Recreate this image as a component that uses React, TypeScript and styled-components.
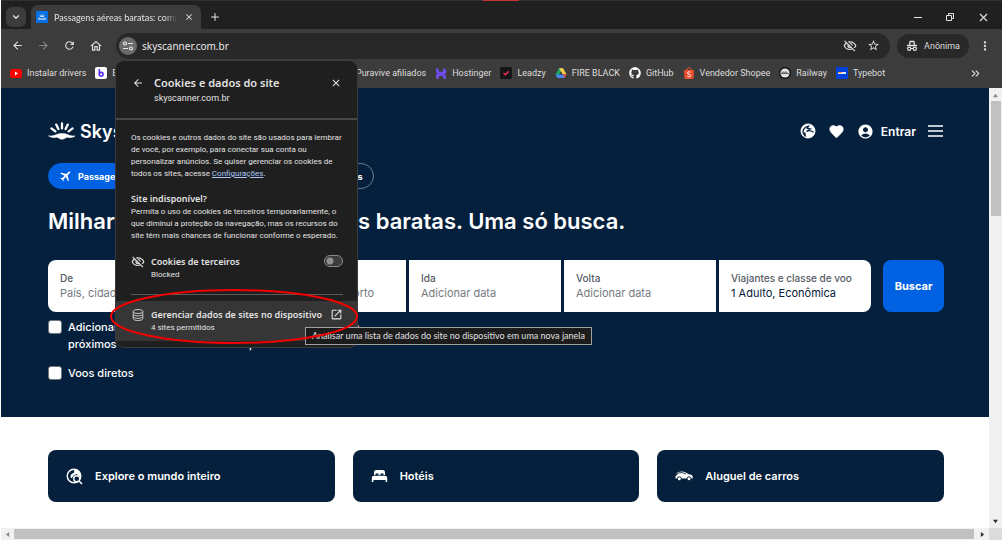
import React, { useState } from "react";
import styled, { createGlobalStyle, css } from "styled-components";
import { ChevronDown, ChevronsRight, X, Plus } from "lucide-react";
import {
  MdStarBorder,
  MdMoreVert,
  MdOutlineHome,
  MdRefresh,
  MdArrowBack,
  MdArrowForward,
  MdOutlineVisibilityOff,
  MdOpenInNew,
  MdFavorite,
  MdAccountCircle,
  MdFlight,
  MdClose,
} from "react-icons/md";
import { FaGithub } from "react-icons/fa";

const ui = `"Noto Sans", "Open Sans", sans-serif`;
const compact = `Roboto, "Noto Sans", sans-serif`;
const narrow = `Lato, Roboto, sans-serif`;
const brand = `Inter, "Liberation Sans", sans-serif`;
const navy = "#05203c";
const blue = "#0062e3";

const Global = createGlobalStyle`
  * { box-sizing: border-box; }
  html, body, #root { height: 100%; }
  body { margin: 0; background: #fff; font-family: ${ui}; }
  button, input { font: inherit; color: inherit; margin: 0; }
  button { border: 0; padding: 0; background: none; cursor: pointer; }
  h1, h2, h3, p { margin: 0; }
  svg { display: block; flex: none; }
`;

const Window = styled.div`
  position: relative;
  display: flex;
  flex-direction: column;
  min-height: 100vh;
  padding-left: 1px;
  overflow: hidden;
`;

/* Browser chrome */
const TabStrip = styled.div`
  display: flex;
  align-items: center;
  height: 29px;
  padding: 4px 12px 0 5px;
  background: #202020;
  border-top: 1px solid #303030;
  color: #e3e3e3;
  font-family: ${narrow};
`;
const RedEdge = styled.div`
  position: absolute;
  top: 0;
  left: 483px;
  width: 36px;
  height: 1px;
  background: #c23434;
`;
const TabSearch = styled.button`
  display: grid;
  place-items: center;
  width: 20px;
  height: 20px;
  border-radius: 6px;
  background: #3c3c3c;
  color: #e3e3e3;
`;
const Tab = styled.div`
  display: flex;
  align-items: center;
  width: 170px;
  height: 25px;
  margin-left: 5px;
  padding: 0 7px 0 5px;
  border-radius: 7px 7px 0 0;
  background: #3c3c3c;
  font-size: 9px;
`;
const TabTitle = styled.span`
  flex: 1;
  margin: 0 7px 0 6px;
  overflow: hidden;
  white-space: nowrap;
  mask-image: linear-gradient(90deg, #000 90%, transparent);
`;
const NewTab = styled.button`
  margin-left: 8px;
`;
const WindowButtons = styled.div`
  display: flex;
  align-items: center;
  gap: 22px;
  margin-left: auto;
`;
const Toolbar = styled.div`
  display: flex;
  align-items: center;
  height: 33px;
  padding: 0 10px;
  background: #3c3c3c;
  color: #dedede;
`;
const NavButtons = styled.div`
  display: flex;
  gap: 13px;
`;
const NavButton = styled.button<{ $dim?: boolean }>`
  color: ${(p) => (p.$dim ? "#858585" : "#dedede")};
`;
const Omnibox = styled.div`
  display: flex;
  flex: 1;
  align-items: center;
  height: 26px;
  margin-left: 13px;
  padding: 0 10px 0 3px;
  border-radius: 13px;
  background: #282828;
  gap: 10px;
`;
const SiteInfo = styled.button`
  display: grid;
  place-items: center;
  width: 18px;
  height: 18px;
  border-radius: 50%;
  background: #6a6a6a;
`;
const Address = styled.input`
  flex: 1;
  min-width: 0;
  padding: 0;
  border: 0;
  outline: 0;
  background: none;
  color: #e8e8e8;
  font-size: 10px;
  margin-left: -5px;
`;
const Incognito = styled.button`
  display: flex;
  align-items: center;
  gap: 6px;
  height: 24px;
  margin: 0 9px 0 7px;
  padding: 0 9px;
  border-radius: 12px;
  background: #282828;
  font-family: ${compact};
  font-size: 9px;
`;
const Bookmarks = styled.nav`
  display: flex;
  align-items: center;
  height: 26px;
  padding: 0 10px 4px 9px;
  background: #3c3c3c;
  color: #dedede;
  font-family: ${compact};
  gap: 9px;
`;
const Bookmark = styled.a`
  display: flex;
  align-items: center;
  gap: 5px;
  color: inherit;
  font-size: 9px;
  text-decoration: none;
  white-space: nowrap;
`;
const Hidden = styled.span<{ $width: number }>`
  width: ${(p) => p.$width}px;
`;
const More = styled.button`
  margin: 0 10px 0 auto;
`;

/* Page */
const Frame = styled.div`
  display: grid;
  flex: 1;
  grid-template-columns: 1fr 13px;
  grid-template-rows: 1fr 12px;
`;
const Page = styled.main`
  min-width: 0;
  background: #fff;
  color: #fff;
  font-family: ${brand};
`;
const Hero = styled.section`
  padding: 33px 45px 35px 47px;
  background: ${navy};
`;
const Header = styled.header`
  display: flex;
  align-items: center;
  justify-content: space-between;
  height: 20px;
`;
const Logo = styled.a`
  display: flex;
  align-items: center;
  gap: 4px;
  color: #fff;
  font-size: 18px;
  font-weight: 600;
  text-decoration: none;
`;
const Actions = styled.div`
  display: flex;
  align-items: center;
  gap: 12px;
`;
const Action = styled.button`
  display: flex;
  align-items: center;
  gap: 7px;
  font-size: 12px;
  font-weight: 600;
`;
const Pills = styled.div`
  display: flex;
  gap: 5px;
  margin-top: 22px;
`;
const Pill = styled.button<{ $active?: boolean }>`
  display: flex;
  align-items: center;
  gap: 5px;
  height: 26px;
  padding: 0 10px;
  border: 1px solid ${(p) => (p.$active ? blue : "#6b7b8e")};
  border-radius: 13px;
  background: ${(p) => (p.$active ? blue : "transparent")};
  font-size: 9px;
  font-weight: 700;
`;
const Title = styled.h1`
  margin-top: 18px;
  font-size: 22px;
  font-weight: 600;
  line-height: 28px;
`;
const Search = styled.form`
  display: grid;
  grid-template-columns: 178fr 177fr 152fr 152fr 152fr 70fr;
  column-gap: 3px;
  margin-top: 25px;
`;
const Field = styled.label`
  display: flex;
  flex-direction: column;
  justify-content: center;
  height: 52px;
  min-width: 0;
  padding: 0 12px;
  background: #fff;
  color: #545b64;
  font-size: 10px;
  font-weight: 500;
  line-height: 15px;
  &:first-of-type { border-radius: 8px 0 0 8px; }
  &:last-of-type { border-radius: 0 8px 8px 0; }
`;
const FieldInput = styled.input`
  width: 100%;
  height: 15px;
  padding: 0;
  border: 0;
  outline: 0;
  background: none;
  color: ${navy};
  font-size: 11px;
  font-weight: 400;
  &::placeholder { color: #747a81; opacity: 1; }
`;
const Submit = styled.button`
  margin-left: 9px;
  border-radius: 8px;
  background: ${blue};
  font-size: 11px;
  font-weight: 700;
`;
const Options = styled.div`
  display: grid;
  grid-template-columns: 178px 178px;
  column-gap: 3px;
  row-gap: 12px;
  margin-top: 7px;
`;
const Option = styled.label`
  display: flex;
  gap: 6px;
  font-size: 11px;
  font-weight: 500;
  line-height: 17px;
`;
const Check = styled.input`
  flex: none;
  width: 14px;
  height: 14px;
  margin-top: 1px;
  appearance: none;
  border: 1px solid #72777d;
  border-radius: 3px;
  background: #fff;
  &:checked { background: ${blue}; }
`;
const Tiles = styled.nav`
  display: grid;
  grid-template-columns: repeat(3, 1fr);
  gap: 18px;
  padding: 33px 45px 25px 47px;
`;
const Tile = styled.a`
  display: flex;
  align-items: center;
  gap: 12px;
  height: 52px;
  padding: 0 18px;
  border-radius: 8px;
  background: ${navy};
  color: #fff;
  font-size: 11px;
  font-weight: 600;
  text-decoration: none;
`;

/* Scroll bars */
const ScrollTrack = styled.div<{ $row?: boolean }>`
  display: flex;
  flex-direction: ${(p) => (p.$row ? "row" : "column")};
  align-items: center;
  justify-content: space-between;
  background: #f1f1f1;
  ${(p) => (p.$row ? css`padding: 0 4px;` : css`padding: 5px 0 4px;`)}
`;
const Thumb = styled.div<{ $row?: boolean }>`
  background: #c1c1c1;
  ${(p) =>
    p.$row
      ? css`flex: 1; height: 10px; margin: 0 6px 0 4px;`
      : css`width: 10px; height: 115px; margin: 3px 0 auto;`}
`;
const Corner = styled.div`
  background: #dcdcdc;
`;

/* Overlays */
const Popover = styled.section`
  position: absolute;
  top: 60px;
  left: 115px;
  width: 243px;
  padding-bottom: 6px;
  border: 1px solid #3a3a3a;
  border-radius: 9px;
  background: #1f1f1f;
  color: #e3e3e3;
  font-family: ${compact};
  font-size: 8px;
  line-height: 12px;
  overflow: hidden;
`;
const PopHead = styled.header`
  display: grid;
  grid-template-columns: 12px 1fr 12px;
  align-items: center;
  column-gap: 10px;
  height: 59px;
  padding: 14px 15px 12px 16px;
  border-bottom: 2px solid #474747;
`;
const PopTitle = styled.h2`
  font-family: ${ui};
  font-size: 11px;
  font-weight: 600;
  line-height: 16px;
`;
const PopSite = styled.p`
  grid-column: 2;
  line-height: 15px;
  font-size: 9px;
`;
const PopBody = styled.div`
  display: flex;
  flex-direction: column;
  padding: 12px 14px 0 15px;
  white-space: nowrap;
`;
const Settings = styled.a`
  color: #a8c7fa;
`;
const PopSub = styled.h3`
  margin-top: 12px;
  font-family: ${ui};
  font-size: 9px;
  font-weight: 600;
  line-height: 14px;
`;
const PopRow = styled.label`
  display: grid;
  grid-template-columns: 14px 1fr auto;
  column-gap: 6px;
  margin-top: 13px;
  padding-bottom: 13px;
  border-bottom: 1px solid #5a5a5a;
`;
const RowTitle = styled.strong`
  display: block;
  font-family: ${ui};
  font-size: 9px;
  font-weight: 600;
  line-height: 14px;
`;
const Toggle = styled.input`
  width: 19px;
  height: 12px;
  appearance: none;
  border: 1px solid #8a8a8a;
  border-radius: 6px;
  background: radial-gradient(circle at 5px 5px, #8f8f8f 3px, #3c3c3c 4px);
`;
const ManageRow = styled.button`
  display: grid;
  grid-template-columns: 14px 1fr 13px;
  align-items: start;
  column-gap: 6px;
  width: 100%;
  margin-top: 6px;
  padding: 7px 14px 7px 15px;
  background: #363636;
  text-align: left;
  white-space: nowrap;
`;
const Mark = styled.svg`
  position: absolute;
  top: 288px;
  left: 109px;
  pointer-events: none;
`;
const Tooltip = styled.div`
  position: absolute;
  top: 327px;
  left: 305px;
  padding: 0 6px;
  border: 1px solid #a0a0a0;
  background: #1c1c1c;
  color: #e0e0e0;
  font-family: ${narrow};
  font-size: 9px;
  line-height: 16px;
  white-space: nowrap;
`;

const Favicon = () => (
  <svg width="12" height="12" viewBox="0 0 12 12">
    <rect width="12" height="12" fill="#0770e3" />
    <path d="M2 8h8M3.5 6.5a3 3 0 0 1 5 0M4 4l.4.8M6 3.3v1M8 4l-.4.8" stroke="#fff" fill="none" />
  </svg>
);
const Tune = () => (
  <svg width="12" height="12" viewBox="0 0 12 12" fill="none" stroke="#e8e8e8" strokeWidth="1.2">
    <circle cx="3" cy="3.5" r="1.5" />
    <path d="M6 3.5h5M1 8.5h5" />
    <circle cx="9" cy="8.5" r="1.5" />
  </svg>
);
const Spy = () => (
  <svg width="12" height="12" viewBox="0 0 12 12" fill="none" stroke="#e3e3e3">
    <path d="M3.5 4.5l.7-3h3.6l.7 3M1 5.5h10" strokeWidth="1.3" />
    <circle cx="3.2" cy="8.8" r="1.6" strokeWidth="1.2" />
    <circle cx="8.8" cy="8.8" r="1.6" strokeWidth="1.2" />
    <path d="M4.8 8.5h2.4" />
  </svg>
);
const YouTube = () => (
  <svg width="12" height="12" viewBox="0 0 12 12">
    <rect y="2" width="12" height="9" rx="2.5" fill="#f00" />
    <path d="M5 4.6v3.8L8 6.5z" fill="#fff" />
  </svg>
);
const BIcon = () => (
  <svg width="12" height="12" viewBox="0 0 12 12">
    <rect width="12" height="12" rx="2" fill="#fff" />
    <path d="M4.3 2v5.5" stroke="#5a31f4" strokeWidth="1.6" />
    <circle cx="6.2" cy="7.3" r="1.9" fill="none" stroke="#5a31f4" strokeWidth="1.6" />
  </svg>
);
const HostingerIcon = () => (
  <svg width="12" height="12" viewBox="0 0 12 12" fill="#6f4be8">
    <path d="M1 1l3 1.6v2.2h4V1l3 1.600v4.300H3.500L1 5.600zM1 11V7h7.500L11 8.300V12.500L8 11V9H4v3.500z" />
  </svg>
);
const LeadzyIcon = () => (
  <svg width="12" height="12" viewBox="0 0 12 12">
    <rect width="12" height="12" rx="1.5" fill="#15151a" />
    <path d="M3.5 6l2 1.8 3.2-3.6" fill="none" stroke="#f52c5c" strokeWidth="1.5" />
  </svg>
);
const DriveIcon = () => (
  <svg width="12" height="12" viewBox="0 0 12 12">
    <path d="M4 1.2h4L6 4.7 2.5 11 .5 7.5z" fill="#1fa463" />
    <path d="M4 1.2h4l3.6 6.3H7.7z" fill="#ffcf48" />
    <path d="M.5 7.6L2.5 11h7l2-3.4h-7z" fill="#4688f4" />
    <path d="M7.7 7.6h3.9L9.5 11z" fill="#ea4335" />
    <path d="M6 4.7l1.7 2.9H4.4z" fill="#3c3c3c" />
  </svg>
);
const ShopeeIcon = () => (
  <svg width="12" height="12" viewBox="0 0 12 12">
    <path d="M1 3h10l-.6 9H1.6z" fill="#ee4d2d" />
    <path d="M4 3a2 2.3 0 0 1 4 0" fill="none" stroke="#ee4d2d" />
    <path d="M7.6 5.3C6.5 4.4 4.5 4.6 4.5 6c0 1.5 3.2 1.1 3.2 2.6 0 1.4-2.2 1.5-3.4.5" fill="none" stroke="#fff" />
  </svg>
);
const RailwayIcon = () => (
  <svg width="12" height="12" viewBox="0 0 12 12">
    <circle cx="6" cy="6" r="6" fill="#111" />
    <circle cx="6" cy="6" r="4.6" fill="#e8e8e8" />
    <path d="M2.5 5.2h6M2 6.6h8" stroke="#333" strokeWidth=".8" />
  </svg>
);
const TypebotIcon = () => (
  <svg width="12" height="12" viewBox="0 0 12 12">
    <rect width="12" height="12" fill="#0042da" />
    <path d="M2 6h8" stroke="#dfe6fa" strokeWidth="2" />
    <path d="M2 5.5h3.5" stroke="#ff8e20" />
  </svg>
);
const Sun = () => (
  <svg width="28" height="20" viewBox="0 0 28 20" fill="none" stroke="#fff" strokeLinecap="round">
    <path d="M14 2.4v5M8.2 3.6l2.2 4.4M19.800 3.6l-2.2 4.4M3.4 7.4l4 3M24.6 7.4l-4 3" strokeWidth="2.3" />
    <path d="M1 15c3.500 0 5-.2 7-1.200 3.700-1.700 8.300-1.700 12 0 2 1 3.500 1.200 7 1.200-2.500 1.600-5 1.900-7.500 1.300-1.500-.3-3 1.900-5.500 1.900s-4-2.200-5.500-1.900c-2.500.6-5 .3-7.500-1.300z" fill="#fff" strokeWidth=".6" />
  </svg>
);
const Globe = () => (
  <svg width="16" height="16" viewBox="0 0 16 16">
    <circle cx="8" cy="8" r="7" fill="#fff" stroke="#fff" />
    <path d="M5.3 13.5L3 9.5C3 6.5 5 4 8.500 3.2L7.300 5.300l3 .5-3.800 2.700C8.500 7.400 11 7.300 13.500 9.300M5.300 13.500L4.800 9.300" fill="none" stroke={navy} strokeWidth="1.3" />
  </svg>
);
const GlobeSearch = () => (
  <svg width="17" height="17" viewBox="0 0 17 17">
    <circle cx="8" cy="8" r="6.8" fill="none" stroke="#fff" strokeWidth="1.4" />
    <path d="M8 1.2a7 7 0 0 1 6.9 6.9L13 8 10.500 6 7.500 7.500 6 10 4.300 9.500 5 6.500l3.200-2z" fill="#fff" />
    <circle cx="10.7" cy="10.7" r="3" fill={navy} stroke="#fff" strokeWidth="1.4" />
    <path d="M13 13l3 3" stroke="#fff" strokeWidth="1.6" />
  </svg>
);
const Bed = () => (
  <svg width="17" height="14" viewBox="0 0 17 14" fill="#fff">
    <path d="M3 6V3.5C3 1.8 4 1 5.5 1h6C13 1 14 1.8 14 3.5V6h-1.500V4.500h-3V6h-2V4.500h-3V6zM.8 13V9c0-1.500 1-2.300 2.500-2.300h10.400c1.500 0 2.500.8 2.500 2.300v4h-1.600v-2H2.400v2z" />
  </svg>
);
const Car = () => (
  <svg width="18" height="12" viewBox="0 0 18 12">
    <path d="M1 3.5C4 .6 10 .6 13 4l3 .7c1.300.4 1.700 1 1.700 3.800H.5c-.4-2 .5-3.500 2.500-4z" fill="#fff" />
    <path d="M1.500 3.800c3-1.500 6-1.700 9.500.2" fill="none" stroke={navy} strokeWidth=".9" />
    <circle cx="4.3" cy="8.8" r="2" fill="#fff" stroke={navy} />
    <circle cx="14" cy="8.800" r="2" fill="#fff" stroke={navy} />
  </svg>
);
const Stack = () => (
  <svg width="14" height="14" viewBox="0 0 14 14" fill="none" stroke="#c8c8c8">
    <ellipse cx="7" cy="3.5" rx="4.8" ry="2" />
    <path d="M2.2 3.5v7c0 2.700 9.600 2.700 9.600 0v-7M2.200 6c0 2.500 9.600 2.500 9.600 0M2.200 8.500c0 2.500 9.600 2.500 9.600 0" />
  </svg>
);
const Burger = () => (
  <svg width="16" height="12" viewBox="0 0 16 12" stroke="#fff" strokeWidth="1.5">
    <path d="M0 1h15M0 6h15M0 11h15" />
  </svg>
);
const Arrow = ({ d, dark }: { d: string; dark?: boolean }) => (
  <svg width="5" height="5" viewBox="0 0 6 6">
    <path d={d} fill={dark ? "#303030" : "#8a8a8a"} />
  </svg>
);

const bookmarks = [
  { name: "Hostinger", icon: <HostingerIcon /> },
  { name: "Leadzy", icon: <LeadzyIcon /> },
  { name: "FIRE BLACK", icon: <DriveIcon /> },
  { name: "GitHub", icon: <FaGithub size={12} color="#fff" /> },
  { name: "Vendedor Shopee", icon: <ShopeeIcon /> },
  { name: "Railway", icon: <RailwayIcon /> },
  { name: "Typebot", icon: <TypebotIcon /> },
];

export default function App() {
  const [allowed, setAllowed] = useState(false);
  return (
    <>
      <Global />
      <Window>
        <TabStrip>
          <TabSearch aria-label="Pesquisar guias"><ChevronDown size={10} strokeWidth={3} /></TabSearch>
          <Tab>
            <Favicon />
            <TabTitle>Passagens aéreas baratas: compare</TabTitle>
            <button aria-label="Fechar guia"><MdClose size={10} /></button>
          </Tab>
          <NewTab aria-label="Nova guia"><Plus size={12} /></NewTab>
          <WindowButtons>
            <button aria-label="Minimizar"><svg width="10" height="10" stroke="#e3e3e3"><path d="M1 5.5h8" /></svg></button>
            <button aria-label="Restaurar">
              <svg width="10" height="10" fill="none" stroke="#e3e3e3"><path d="M1.5 3.5h5v5h-5zM3.5 3.5v-2h5v5h-2" /></svg>
            </button>
            <button aria-label="Fechar"><X size={13} strokeWidth={2} /></button>
          </WindowButtons>
        </TabStrip>
        <RedEdge />
        <Toolbar>
          <NavButtons>
            <NavButton aria-label="Voltar"><MdArrowBack size={13} /></NavButton>
            <NavButton aria-label="Avançar" $dim><MdArrowForward size={13} /></NavButton>
            <NavButton aria-label="Recarregar"><MdRefresh size={13} /></NavButton>
            <NavButton aria-label="Início"><MdOutlineHome size={14} /></NavButton>
          </NavButtons>
          <Omnibox>
            <SiteInfo aria-label="Informações do site"><Tune /></SiteInfo>
            <Address aria-label="Endereço" defaultValue="skyscanner.com.br" />
            <MdOutlineVisibilityOff size={14} />
            <MdStarBorder size={13} />
          </Omnibox>
          <Incognito><Spy />Anônima</Incognito>
          <button aria-label="Menu"><MdMoreVert size={14} /></button>
        </Toolbar>
        <Bookmarks>
          <Bookmark href="#"><YouTube />Instalar drivers</Bookmark>
          <Bookmark href="#"><BIcon />B</Bookmark>
          <Hidden $width={220} />
          <Bookmark href="#">Puravive afiliados</Bookmark>
          {bookmarks.map((b) => (
            <Bookmark href="#" key={b.name}>{b.icon}{b.name}</Bookmark>
          ))}
          <More aria-label="Mais favoritos"><ChevronsRight size={13} /></More>
        </Bookmarks>
        <Frame>
          <Page>
            <Hero>
              <Header>
                <Logo href="#"><Sun />Skyscanner</Logo>
                <Actions>
                  <Action aria-label="Região"><Globe /></Action>
                  <Action aria-label="Salvos"><MdFavorite size={17} /></Action>
                  <Action><MdAccountCircle size={17} />Entrar</Action>
                  <Action aria-label="Abrir menu"><Burger /></Action>
                </Actions>
              </Header>
              <Pills>
                <Pill $active><MdFlight size={14} transform="rotate(45)" />Passagens aéreas</Pill>
                <Pill><Bed />Hotéis</Pill>
                <Pill><Car />Aluguel de carros</Pill>
              </Pills>
              <Title>Milhares de passagens aéreas baratas. Uma só busca.</Title>
              <Search onSubmit={(e) => e.preventDefault()}>
                <Field>De<FieldInput placeholder="País, cidade ou aeroporto" /></Field>
                <Field>Para<FieldInput placeholder="País, cidade ou aeroporto" /></Field>
                <Field>Ida<FieldInput placeholder="Adicionar data" /></Field>
                <Field>Volta<FieldInput placeholder="Adicionar data" /></Field>
                <Field>Viajantes e classe de voo<FieldInput defaultValue="1 Adulto, Econômica" /></Field>
                <Submit>Buscar</Submit>
              </Search>
              <Options>
                <Option><Check type="checkbox" />Adicionar aeroportos próximos</Option>
                <Option><Check type="checkbox" />Adicionar aeroportos próximos</Option>
                <Option><Check type="checkbox" />Voos diretos</Option>
              </Options>
            </Hero>
            <Tiles>
              <Tile href="#"><GlobeSearch />Explore o mundo inteiro</Tile>
              <Tile href="#"><Bed />Hotéis</Tile>
              <Tile href="#"><Car />Aluguel de carros</Tile>
            </Tiles>
          </Page>
          <ScrollTrack>
            <Arrow d="M0 5l3-4 3 4z" />
            <Thumb />
            <Arrow dark d="M0 1l3 4 3-4z" />
          </ScrollTrack>
          <ScrollTrack $row>
            <Arrow d="M5 0L1 3l4 3z" />
            <Thumb $row />
            <Arrow dark d="M1 0l4 3-4 3z" />
          </ScrollTrack>
          <Corner />
        </Frame>

        <Popover>
          <PopHead>
            <button aria-label="Voltar"><MdArrowBack size={12} /></button>
            <PopTitle>Cookies e dados do site</PopTitle>
            <button aria-label="Fechar"><MdClose size={12} /></button>
            <PopSite>skyscanner.com.br</PopSite>
          </PopHead>
          <PopBody>
            <p>
              Os cookies e outros dados do site são usados para lembrar<br />
              de você, por exemplo, para conectar sua conta ou<br />
              personalizar anúncios. Se quiser gerenciar os cookies de<br />
              todos os sites, acesse <Settings href="#">Configurações</Settings>.
            </p>
            <PopSub>Site indisponível?</PopSub>
            <p>
              Permita o uso de cookies de terceiros temporariamente, o<br />
              que diminui a proteção da navegação, mas os recursos do<br />
              site têm mais chances de funcionar conforme o esperado.
            </p>
            <PopRow>
              <MdOutlineVisibilityOff size={14} />
              <span><RowTitle>Cookies de terceiros</RowTitle>Blocked</span>
              <Toggle type="checkbox" checked={allowed} onChange={(e) => setAllowed(e.target.checked)} />
            </PopRow>
          </PopBody>
          <ManageRow>
            <Stack />
            <span><RowTitle>Gerenciar dados de sites no dispositivo</RowTitle>4 sites permitidos</span>
            <MdOpenInNew size={13} />
          </ManageRow>
        </Popover>
        <Tooltip role="tooltip">Analisar uma lista de dados do site no dispositivo em uma nova janela</Tooltip>
        <Mark width="250" height="58" viewBox="0 0 250 58" fill="none" stroke="#f40000" strokeWidth="2">
          <ellipse cx="125" cy="28.5" rx="123" ry="26.5" />
        </Mark>
      </Window>
    </>
  );
}
